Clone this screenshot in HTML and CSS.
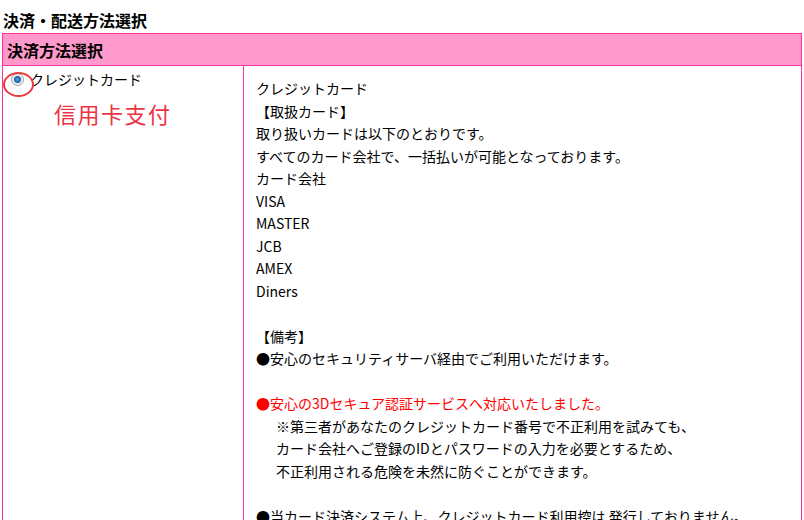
FILE: index.html
```html
<!DOCTYPE html>
<html lang="ja">
<head>
  <meta charset="UTF-8" />
  <meta name="viewport" content="width=device-width, initial-scale=1.0" />
  <title>決済・配送方法選択</title>
  <link rel="stylesheet" href="styles.css">
</head>
<body>

  <!-- 決済方法 -->
  <h2 class="pageTitle">決済・配送方法選択</h2>

  <table class="payTable">
    <tr>
      <th colspan="2">決済方法選択</th>
    </tr>
    <tr>
      <td class="choice">
        <label class="radioLabel">
          <input type="radio" name="payment" value="credit" checked />
          クレジットカード
        </label>
        <span class="markRing"></span>
        <p class="note">信用卡支付</p>
      </td>
      <td class="detail">
        クレジットカード<br>
        【取扱カード】<br>
        取り扱いカードは以下のとおりです。<br>
        すべてのカード会社で、一括払いが可能となっております。<br>
        カード会社<br>
        VISA<br>
        MASTER<br>
        JCB<br>
        AMEX<br>
        Diners<br>
        <br>
        【備考】<br>
        ●安心のセキュリティサーバ経由でご利用いただけます。<br>
        <br>
        <span class="red">●安心の3Dセキュア認証サービスへ対応いたしました。</span><br>
        <div class="indent">
          ※第三者があなたのクレジットカード番号で不正利用を試みても、<br>
          カード会社へご登録のIDとパスワードの入力を必要とするため、<br>
          不正利用される危険を未然に防ぐことができます。
        </div>
        <br>
        ●当カード決済システム上、クレジットカード利用控は 発行しておりません。
      </td>
    </tr>
  </table>

</body>
</html>
```

FILE: styles.css
```css
body {
  font-family: "Noto Sans CJK JP", "Liberation Sans", sans-serif;
  color: #000;
  background: #fff;
  margin: 0;
  padding: 10px 2px 0;
}

.pageTitle {
  font-size: 16px;
  line-height: 20px;
  margin: 0 0 3px 1px;
  font-weight: bold;
}

.payTable {
  width: 800px;
  border-collapse: collapse;
  font-size: 14px;
}

.payTable th,
.payTable td {
  border: 1px solid #ff3399;
}

.payTable th {
  background: #ff99cc;
  text-align: left;
  font-size: 16px;
  height: 31px;
  padding: 0 4px;
  font-weight: bold;
}

.choice {
  width: 232px;
  vertical-align: top;
  padding: 3px 0 0 8px;
  position: relative;
}

.radioLabel {
  display: flex;
  align-items: center;
  gap: 6px;
  line-height: 20px;
}

.radioLabel input {
  appearance: none;
  width: 13px;
  height: 13px;
  margin: 0;
  border-radius: 50%;
  border: 1px solid #a0a0a0;
  background: radial-gradient(circle, #5aa8e8 0, #1c5fa8 3px, #e8e8e8 4px, #fafafa 6px);
}

.markRing {
  position: absolute;
  left: 0;
  top: 6px;
  width: 27px;
  height: 21px;
  border: 2px solid #e83a3a;
  border-radius: 50%;
}

.note {
  margin: 9px 0 0 43px;
  font-size: 22px;
  line-height: 30px;
  color: #ee3344;
  letter-spacing: 1.5px;
}

.detail {
  vertical-align: top;
  padding: 11px 12px 0;
  line-height: 22.5px;
}

.red {
  color: #ff0000;
}

.indent {
  padding-left: 20px;
}
```
